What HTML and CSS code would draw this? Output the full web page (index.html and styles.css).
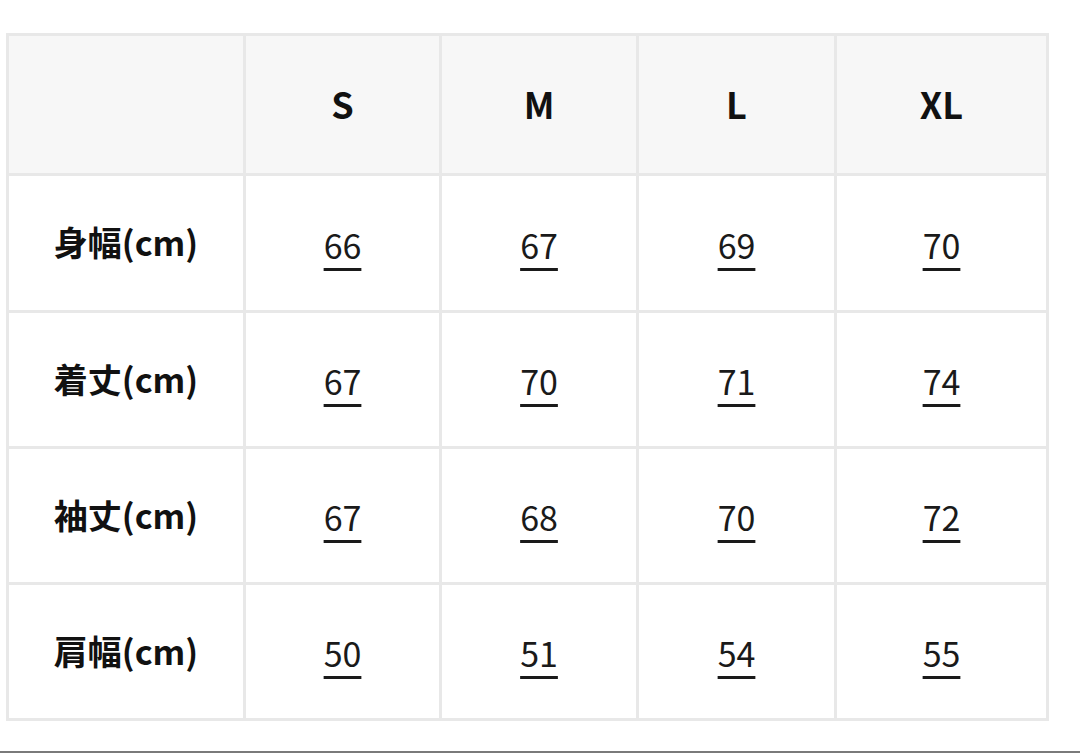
FILE: index.html
```html
<!DOCTYPE html>
<html lang="ja">
<head>
<meta charset="utf-8">
<link rel="stylesheet" href="styles.css">
</head>
<body>
<div class="page">
  <div class="size-table">
    <div class="cell head"></div>
    <div class="cell head">S</div>
    <div class="cell head">M</div>
    <div class="cell head">L</div>
    <div class="cell head">XL</div>

    <div class="cell label">身幅(cm)</div>
    <div class="cell"><span class="num">66</span></div>
    <div class="cell"><span class="num">67</span></div>
    <div class="cell"><span class="num">69</span></div>
    <div class="cell"><span class="num">70</span></div>

    <div class="cell label">着丈(cm)</div>
    <div class="cell"><span class="num">67</span></div>
    <div class="cell"><span class="num">70</span></div>
    <div class="cell"><span class="num">71</span></div>
    <div class="cell"><span class="num">74</span></div>

    <div class="cell label">袖丈(cm)</div>
    <div class="cell"><span class="num">67</span></div>
    <div class="cell"><span class="num">68</span></div>
    <div class="cell"><span class="num">70</span></div>
    <div class="cell"><span class="num">72</span></div>

    <div class="cell label">肩幅(cm)</div>
    <div class="cell"><span class="num">50</span></div>
    <div class="cell"><span class="num">51</span></div>
    <div class="cell"><span class="num">54</span></div>
    <div class="cell"><span class="num">55</span></div>
  </div>
</div>
<div class="bottom-bar"></div>
</body>
</html>
```

FILE: styles.css
```css
html, body {
  margin: 0;
  padding: 0;
  background: #ffffff;
}

body {
  width: 1080px;
  height: 753px;
  overflow: hidden;
  font-family: "Noto Sans CJK JP", "Noto Sans", sans-serif;
  color: #1a1a1a;
  display: flex;
  flex-direction: column;
}

.page {
  flex: 1;
  padding: 33px 0 0 6px;
}

.size-table {
  display: grid;
  grid-template-columns: 234px 193px 194px 195px 209px;
  grid-template-rows: 137px 134px 133px 133px 133px;
  gap: 3px;
  padding: 3px;
  background: #e8e8e8;
  width: max-content;
}

.cell {
  background: #ffffff;
  display: flex;
  align-items: center;
  justify-content: center;
  font-size: 34px;
  line-height: 1;
}

.head {
  background: #f7f7f7;
  font-weight: 700;
  font-size: 36px;
  color: #111;
  padding-bottom: 3px;
}

.label {
  font-weight: 700;
  color: #111;
  padding-bottom: 2px;
}

.num {
  font-weight: 400;
  text-decoration: underline;
  text-decoration-thickness: 3px;
  text-underline-offset: 9px;
  padding-top: 3px;
}

.bottom-bar {
  height: 2px;
  background: #7a7a7a;
}
```
